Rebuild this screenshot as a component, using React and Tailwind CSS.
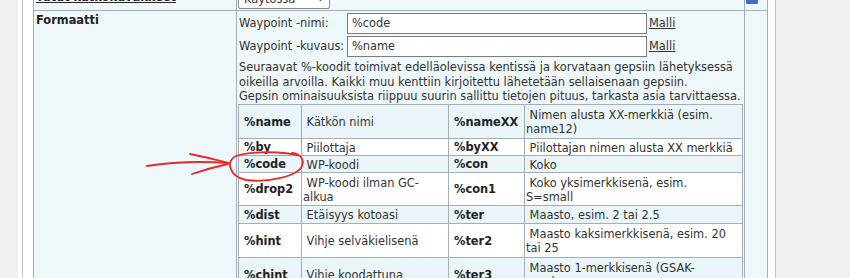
import React from 'react';

const rows = [
  ['%name', ['Kätkön nimi'], '%nameXX', ['Nimen alusta XX-merkkiä (esim.', 'name12)'], 'h-[34px]'],
  ['%by', ['Piilottaja'], '%byXX', ['Piilottajan nimen alusta XX merkkiä'], 'h-[17px]'],
  ['%code', ['WP-koodi'], '%con', ['Koko'], 'h-[17px]'],
  ['%drop2', ['WP-koodi ilman GC-', 'alkua'], '%con1', ['Koko yksimerkkisenä, esim.', 'S=small'], 'h-[33px]'],
  ['%dist', ['Etäisyys kotoasi'], '%ter', ['Maasto, esim. 2 tai 2.5'], 'h-[18px]'],
  ['%hint', ['Vihje selväkielisenä'], '%ter2', ['Maasto kaksimerkkisenä, esim. 20', 'tai 25'], 'h-[34px]'],
  ['%chint', ['Vihje koodattuna'], '%ter3', ['Maasto 1-merkkisenä (GSAK-', 'arvo)'], 'h-[34px]'],
];

function Desc({ lines }) {
  return (
    <span className="whitespace-nowrap">
      {lines.map((l, i) => (
        <React.Fragment key={i}>
          {i === 0 ? '\u00a0' + l : l}
          {i < lines.length - 1 && <br />}
        </React.Fragment>
      ))}
    </span>
  );
}

function CodeTable() {
  return (
    <div className="ml-[1px] grid w-[505px] grid-cols-[63px_147px_76px_218px] border-l border-t border-[#a3afb4]">
      {rows.map(([k1, d1, k2, d2, h], i) => {
        const bg = i % 2 === 0 ? 'bg-[#eaf5f9]' : 'bg-white';
        const cell = `${h} ${bg} border-r border-b border-[#a3afb4] flex items-center pt-[2px]`;
        return (
          <React.Fragment key={k1}>
            <div className={`${cell} pl-[5px] font-bold text-[#222]`}>{k1}</div>
            <div className={`${cell} pl-[1px] leading-[14px]`}><Desc lines={d1} /></div>
            <div className={`${cell} pl-[5px] font-bold text-[#222]`}>{k2}</div>
            <div className={`${cell} pl-[1px] leading-[14px]`}><Desc lines={d2} /></div>
          </React.Fragment>
        );
      })}
    </div>
  );
}

function FieldRow({ label, value, className = '' }) {
  return (
    <div className={`flex items-center pl-[2px] ${className}`}>
      <span className="w-[108px] whitespace-nowrap">{label}</span>
      <div className="flex h-[21px] w-[300px] items-center border border-[#7b7b7b] bg-white pl-[4px]">{value}</div>
      <a className="ml-[2px] text-[#333] underline">Malli</a>
    </div>
  );
}

export default function App() {
  return (
    <div className="relative flex h-[278px] w-[850px] overflow-hidden bg-[#f0f0f0] font-['DejaVu_Sans',Verdana,sans-serif] text-[11.4px] leading-[14.5px] text-[#333]">
      <div className="-mt-[13px] ml-[18px] h-[330px] w-[758px] self-start bg-white pl-[4px]">
        <div className="h-full border-x border-[#c4c4c4] bg-white pl-[10px] pr-[7px]">
          <div className="grid w-[735px] grid-cols-[203px_508px_23px] border-l border-t border-[#a3afb4]">
            {/* top row, mostly scrolled away */}
            <div className="h-[23px] border-r border-b border-[#a3afb4] bg-[#eef7fa] pl-[2px] pt-[2px]">
              <a className="whitespace-nowrap font-bold text-[#222] underline">Tutut kätkökuvakkeet</a>
            </div>
            <div className="flex h-[23px] items-end border-r border-b border-[#a3afb4] bg-[#eef7fa] pb-[1px] pl-[1px]">
              <div className="flex h-[20px] w-[92px] items-center justify-between rounded-[2px] border border-[#8a8a8a] bg-white pl-[5px] pr-[4px]">
                <span>Käytössä</span>
                <svg width="9" height="6" viewBox="0 0 9 6" fill="none">
                  <path d="M1 1l3.5 3.5L8 1" stroke="#555" strokeWidth="1.2" />
                </svg>
              </div>
            </div>
            <div className="h-[23px] border-r border-b border-[#a3afb4] bg-[#eef7fa] pl-[1px] pt-[3px]">
              <div className="h-[13px] w-[12px] rounded-[1px] bg-[#3f6fc2]" />
            </div>

            {/* Formaatti */}
            <div className="border-r border-b border-[#a3afb4] bg-[#eef7fa] pl-[2px] pt-[2px] font-bold text-[#222]">Formaatti</div>
            <div className="border-r border-b border-[#a3afb4] bg-[#eef7fa] pt-[2px]">
              <FieldRow label="Waypoint -nimi:" value="%code" />
              <FieldRow label="Waypoint -kuvaus:" value="%name" className="mt-[2px]" />
              <p className="mt-[3px] whitespace-nowrap pl-[2px]">
                Seuraavat %-koodit toimivat edelläolevissa kentissä ja korvataan gepsiin lähetyksessä
                <br />
                oikeilla arvoilla. Kaikki muu kenttiin kirjoitettu lähetetään sellaisenaan gepsiin.
                <br />
                Gepsin ominaisuuksista riippuu suurin sallittu tietojen pituus, tarkasta asia tarvittaessa.
              </p>
              <CodeTable />
            </div>
            <div className="border-r border-b border-[#a3afb4] bg-[#eef7fa]" />
          </div>
        </div>
      </div>

      {/* red hand-drawn annotation */}
      <svg className="pointer-events-none absolute left-0 top-0" width="850" height="278" fill="none">
        <g stroke="#e22b2b" strokeWidth="1.8" strokeLinecap="round">
          <path d="M147 166 Q185 160 228 163" />
          <path d="M190 154 Q210 158 229 163" />
          <path d="M192 174 Q210 168 228 164" />
          <path d="M300 156 C285 151 250 151 236 156 C226 160 228 176 246 180 C268 183 298 176 302 166 C305 159 300 154 292 153" />
        </g>
      </svg>
    </div>
  );
}
